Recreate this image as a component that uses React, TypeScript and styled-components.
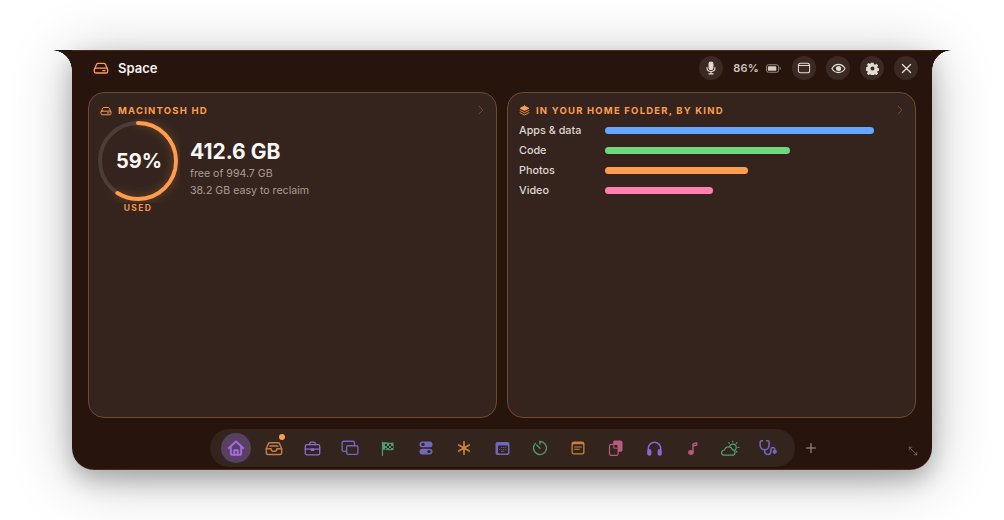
import { ReactNode } from "react";
import styled, { createGlobalStyle } from "styled-components";

const Global = createGlobalStyle`
  html, body {
    margin: 0;
    padding: 0;
    background: #fff;
    font-family: Inter, "Liberation Sans", sans-serif;
    -webkit-font-smoothing: antialiased;
  }
`;

const Page = styled.div`
  width: 1004px;
  height: 520px;
  overflow: hidden;
  padding: 50px 72px 50px;
  box-sizing: border-box;
`;

const Window = styled.div`
  position: relative;
  height: 420px;
  display: flex;
  flex-direction: column;
  background: #27140c;
  border-radius: 0 0 22px 22px;
  box-shadow: 0 10px 22px rgba(0, 0, 0, 0.22), 0 8px 60px rgba(0, 0, 0, 0.26),
    0 0.5px 0 rgba(255, 170, 110, 0.3) inset, 0 -0.5px 0 rgba(255, 170, 110, 0.3) inset;

  &::before,
  &::after {
    content: "";
    position: absolute;
    top: 0;
    width: 20px;
    height: 20px;
  }
  &::before {
    left: -20px;
    background: radial-gradient(circle at 0 100%, transparent 19.5px, #27140c 20px);
  }
  &::after {
    right: -20px;
    background: radial-gradient(circle at 100% 100%, transparent 19.5px, #27140c 20px);
  }
`;

const Header = styled.header`
  display: flex;
  align-items: center;
  height: 36px;
  padding: 0 14px 0 21px;
`;

const Title = styled.div`
  display: flex;
  align-items: center;
  gap: 9px;
  flex: 1;
  margin-bottom: 1px;
  font-size: 13px;
  font-weight: 600;
  color: #f6f2ee;
`;

const Controls = styled.div`
  display: flex;
  align-items: center;
  gap: 10px;
`;

const RoundButton = styled.button`
  width: 24px;
  height: 24px;
  padding: 0;
  border: none;
  border-radius: 50%;
  background: #3a2a23;
  color: #e3dbd5;
  display: flex;
  align-items: center;
  justify-content: center;
`;

const Battery = styled.div`
  display: flex;
  align-items: center;
  gap: 7px;
  margin-right: 1px;
  font-size: 11px;
  font-weight: 600;
  letter-spacing: 0.2px;
  color: #cfc6c0;
`;

const Panels = styled.main`
  flex: none;
  height: 326px;
  margin-top: 6px;
  padding: 0 16px;
  display: grid;
  grid-template-columns: 1fr 1fr;
  gap: 10px;
`;

const Panel = styled.section`
  position: relative;
  border: 1px solid #74482a;
  border-radius: 16px;
  background: #35241d;
  padding: 11px 12px 11px 11px;
  box-sizing: border-box;
`;

const PanelHead = styled.div`
  display: flex;
  align-items: center;
  gap: 6px;
  height: 13px;
  font-size: 9.5px;
  font-weight: 700;
  letter-spacing: 1.2px;
  color: #ff9d4d;
`;

const Chevron = styled.div`
  position: absolute;
  top: 12px;
  right: 10px;
  color: #7a6250;
  display: flex;
`;

const DiskRow = styled.div`
  display: flex;
  align-items: flex-start;
  gap: 10px;
  margin-top: 2px;
  margin-left: -4px;
`;

const RingWrap = styled.div`
  position: relative;
  width: 84px;
  flex: none;
  display: flex;
  flex-direction: column;
  align-items: center;
`;

const RingValue = styled.div`
  position: absolute;
  top: 0;
  left: 1px;
  width: 84px;
  height: 84px;
  display: flex;
  align-items: center;
  justify-content: center;
  font-size: 20px;
  font-weight: 700;
  color: #fbf8f6;
`;

const RingLabel = styled.div`
  font-size: 8.5px;
  font-weight: 700;
  letter-spacing: 1.3px;
  color: #f0964c;
`;

const DiskText = styled.div`
  display: flex;
  flex-direction: column;
  padding-top: 21px;
`;

const BigValue = styled.div`
  font-size: 21px;
  line-height: 24px;
  font-weight: 700;
  color: #fbf8f6;
  margin-bottom: 1px;
`;

const SubText = styled.div`
  font-size: 10.6px;
  line-height: 17px;
  color: #a99c95;
`;

const Rows = styled.div`
  display: flex;
  flex-direction: column;
  gap: 6px;
  margin-top: 6px;
  padding-right: 29px;
`;

const Row = styled.div`
  display: flex;
  align-items: center;
  height: 14px;
`;

const RowLabel = styled.div`
  width: 86px;
  flex: none;
  font-size: 10.8px;
  font-weight: 500;
  color: #ddd6d1;
`;

const Track = styled.div`
  flex: 1;
  height: 7px;
`;

const Fill = styled.div<{ $color: string; $pct: number }>`
  height: 100%;
  width: ${(p) => p.$pct}%;
  border-radius: 4px;
  background: ${(p) => p.$color};
`;

const Footer = styled.footer`
  flex: 1;
  display: flex;
  align-items: flex-start;
  padding: 11px 0 0 138px;
`;

const Dock = styled.nav`
  display: flex;
  align-items: center;
  gap: 8px;
  height: 38px;
  padding: 0 12px 0 11px;
  border-radius: 19px;
  background: #33241e;
`;

const DockItem = styled.div<{ $active?: boolean; $color: string }>`
  position: relative;
  width: 30px;
  height: 30px;
  flex: none;
  display: flex;
  align-items: center;
  justify-content: center;
  border-radius: 50%;
  color: ${(p) => p.$color};
  background: ${(p) => (p.$active ? "#574060" : "transparent")};
`;

const Dot = styled.span`
  position: absolute;
  top: 1px;
  right: 4px;
  width: 6px;
  height: 6px;
  border-radius: 50%;
  background: #ff9d4d;
`;

const AddButton = styled.div`
  margin-left: 10px;
  height: 38px;
  display: flex;
  align-items: center;
  color: #a59a94;
`;

const ResizeGrip = styled.div`
  position: absolute;
  right: 13px;
  bottom: 13px;
  display: flex;
  color: #7a6670;
`;

type IconProps = { size?: number; children: ReactNode; sw?: number };

function Ico({ size = 16, children, sw = 1.5 }: IconProps) {
  return (
    <svg
      width={size}
      height={size}
      viewBox="0 0 16 16"
      fill="none"
      stroke="currentColor"
      strokeWidth={sw}
      strokeLinecap="round"
      strokeLinejoin="round"
    >
      {children}
    </svg>
  );
}

function DiskIcon({ size = 16, sw = 1.3 }: { size?: number; sw?: number }) {
  return (
    <Ico size={size} sw={sw}>
      <path d="M1.5 9.2 3.6 4.3C3.9 3.6 4.4 3.3 5.1 3.3h5.8c.7 0 1.2.3 1.5 1l2.1 4.9" />
      <rect x="1.3" y="8.2" width="13.4" height="4.8" rx="1.6" />
      <path d="M9.8 10.6h2.4" />
    </Ico>
  );
}

const dockIcons: { color: string; icon: ReactNode; active?: boolean; dot?: boolean }[] = [
  {
    color: "#a768e6",
    active: true,
    icon: (
      <Ico size={18} sw={1.7}>
        <path d="M1.6 8 8 2.200 14.400 8" />
        <path d="M3.400 7v6.400c0 .4.2.6.6.6h8c.4 0 .6-.2.6-.6V7" />
        <path d="M6.400 14v-4h3.200v4" />
      </Ico>
    ),
  },
  {
    color: "#c27c48",
    dot: true,
    icon: (
      <Ico size={18} sw={1.3}>
        <path d="M1.200 8.600 3 4.200c.2-.5.6-.8 1.200-.8h7.600c.6 0 1 .3 1.200.8l1.800 4.400" />
        <path d="M1.200 8.600v3.600c0 1 .6 1.600 1.600 1.600h10.400c1 0 1.600-.6 1.600-1.600V8.600h-4.200c0 1.400-1 2.400-2.600 2.400S5.400 10 5.400 8.600H1.200Z" />
        <path d="M4.400 6.200h7.200" />
      </Ico>
    ),
  },
  {
    color: "#8f6cd2",
    icon: (
      <Ico size={17} sw={1.2}>
        <rect x="1.200" y="4.400" width="13.600" height="9.600" rx="1.600" />
        <path d="M5.400 4.400V3.200c0-.7.4-1.100 1.100-1.100h3c.7 0 1.100.4 1.100 1.100v1.200" />
        <path d="M1.200 8.600h13.600" />
        <path d="M7 8.600h2v1.200H7z" />
      </Ico>
    ),
  },
  {
    color: "#6f68bc",
    icon: (
      <Ico size={18} sw={1.2}>
        <path d="M5 11H2.400C1.500 11 1 10.500 1 9.600V3.400C1 2.500 1.500 2 2.400 2h8.200c.9 0 1.400.5 1.400 1.400V6" />
        <rect x="5" y="6" width="10" height="7.600" rx="1.400" />
      </Ico>
    ),
  },
  {
    color: "#4f9e6c",
    icon: (
      <svg width="14" height="15" viewBox="0 0 14 15">
        <path d="M1.500 1v13.500" fill="none" stroke="currentColor" strokeWidth="1.200" strokeLinecap="round" />
        <path d="M2 1.500c3-.8 5 .8 10.500 0v7.500c-5.500.8-7.500-.8-10.500 0V1.500Z" fill="currentColor" />
        <path d="M4 3h2v2H4zM8 3h2v2H8zM6 5h2v2H6zM10 5h2v2h-2zM4 7h1.500v1.200H4zM8 7h2v1.200H8z" fill="#33241e" />
      </svg>
    ),
  },
  {
    color: "#6f68bc",
    icon: (
      <svg width="14" height="16" viewBox="0 0 14 16">
        <rect x="0.500" y="1.500" width="13" height="5.800" rx="2.900" fill="currentColor" />
        <circle cx="4" cy="4.400" r="1.700" fill="#33241e" />
        <rect x="0.500" y="8.700" width="13" height="5.800" rx="2.900" fill="currentColor" />
        <circle cx="10" cy="11.600" r="1.700" fill="#33241e" />
      </svg>
    ),
  },
  {
    color: "#c9803f",
    icon: (
      <Ico size={16} sw={1.7}>
        <path d="M8 1.800v12.400M2.700 4.900l10.600 6.200M13.300 4.900 2.700 11.100" />
      </Ico>
    ),
  },
  {
    color: "#6f68bc",
    icon: (
      <svg width="15" height="15" viewBox="0 0 15 15">
        <rect x="0.500" y="1" width="14" height="13" rx="2" fill="currentColor" />
        <rect x="3" y="4.500" width="10" height="8" rx="1" fill="#33241e" />
        <path
          d="M6 6h1.200v1H6zM8 6h1.200v1H8zM10 6h1.200v1H10zM4 8h1.200v1H4zM6 8h1.200v1H6zM8 8h1.200v1H8zM10 8h1.200v1H10zM6 10h3.200v1H6z"
          fill="currentColor"
          opacity={0.7}
        />
      </svg>
    ),
  },
  {
    color: "#4f9e6c",
    icon: (
      <Ico size={16} sw={1.3}>
        <path d="M8 1.500a6.500 6.500 0 1 1-4.600 1.900" />
        <path d="M8 1.500v2.600" />
        <path d="M4.700 5 8 8.200" />
      </Ico>
    ),
  },
  {
    color: "#c9803f",
    icon: (
      <svg width="14" height="14" viewBox="0 0 14 14">
        <rect x="0.500" y="0.500" width="13" height="13" rx="2.500" fill="currentColor" />
        <rect x="1.800" y="3.200" width="10.400" height="9" rx="0.800" fill="#33241e" />
        <path d="M3.200 5.500h7.600v1H3.200zM3.200 7.800h5.500v1H3.200z" fill="currentColor" />
      </svg>
    ),
  },
  {
    color: "#b85a82",
    icon: (
      <svg width="16" height="18" viewBox="0 0 16 18">
        <path d="M5.200 3c0-1 .6-1.600 1.600-1.600h5.600c1.200 0 2.100.9 2.100 2.100v7.600c0 1-.6 1.600-1.600 1.600H6.800c-1 0-1.600-.6-1.600-1.600V3Z" fill="currentColor" />
        <rect x="1.500" y="5.400" width="8.600" height="11" rx="1.600" fill="#33241e" stroke="currentColor" strokeWidth="1.200" />
        <path d="M5.800 5.800v3.400h3.800" fill="none" stroke="currentColor" strokeWidth="1" />
      </svg>
    ),
  },
  {
    color: "#8f62d2",
    icon: (
      <Ico size={17} sw={1.4}>
        <path d="M2.200 11V8a5.800 5.800 0 0 1 11.600 0v3" />
        <rect x="1.800" y="9.200" width="2.600" height="5" rx="1.200" fill="currentColor" />
        <rect x="11.600" y="9.200" width="2.600" height="5" rx="1.200" fill="currentColor" />
      </Ico>
    ),
  },
  {
    color: "#b85a82",
    icon: (
      <Ico size={15} sw={1.5}>
        <path d="M8.500 12.300V3.200c1.600-.9 2.700-1 4-1.200v2.200c-1.400.2-2.500.4-4 1.200" />
        <ellipse cx="6.300" cy="12.300" rx="2.200" ry="1.900" fill="currentColor" />
      </Ico>
    ),
  },
  {
    color: "#4f9e6c",
    icon: (
      <svg width="20" height="17" viewBox="0 0 20 17" fill="none" stroke="currentColor" strokeWidth="1.200" strokeLinecap="round">
        <path d="M4.200 15.200h7.600c1.900 0 3.200-1.200 3.200-2.800 0-1.500-1.200-2.600-2.700-2.700C11.800 7.800 10.400 6.800 8.600 6.800c-2.100 0-3.700 1.400-4 3.200-1.700.1-3 1.200-3 2.700 0 1.500 1.100 2.500 2.600 2.500Z" />
        <path d="M9.600 6.600c.4-1.500 1.700-2.500 3.200-2.500 1.900 0 3.400 1.500 3.400 3.400 0 1-.4 1.900-1.100 2.500" />
        <path d="M12.800 1v1M17 2.700l-.7.7M19 7.500h-1M17 12l-.7-.7M8.700 2.700l.6.6" />
      </svg>
    ),
  },
  {
    color: "#6f68bc",
    icon: (
      <Ico size={18} sw={1.4}>
        <path d="M3.200 1.600h-.9C1.600 1.600 1 2.200 1 3v2.400C1 7.700 2.800 9.600 5 9.600S9 7.700 9 5.400V3c0-.8-.6-1.400-1.300-1.400h-.9" />
        <path d="M5 9.600v.7c0 2 1.300 3.500 3 3.500s2.600-1.400 2.600-3.100V9.300c0-1 .7-1.800 1.700-1.800s1.700.8 1.700 1.800v.3" />
        <circle cx="14" cy="11.400" r="1.200" fill="currentColor" />
      </Ico>
    ),
  },
];

const kinds = [
  { label: "Apps & data", color: "#66a6ff", pct: 100 },
  { label: "Code", color: "#70d67f", pct: 68.8 },
  { label: "Photos", color: "#ff9d4f", pct: 53.2 },
  { label: "Video", color: "#ff7fb0", pct: 40 },
];

function Ring({ pct }: { pct: number }) {
  const r = 38;
  const c = 2 * Math.PI * r;
  return (
    <svg width="84" height="84" viewBox="0 0 84 84">
      <circle cx="42" cy="42" r={r} fill="none" stroke="#4b3d37" strokeWidth="4" />
      <circle
        cx="42"
        cy="42"
        r={r}
        fill="none"
        stroke="#ff9d4d"
        strokeWidth="4"
        strokeLinecap="round"
        strokeDasharray={`${(c * pct) / 100} ${c}`}
        transform="rotate(-90 42 42)"
        style={{ filter: "drop-shadow(0 0 4px rgba(255,157,77,.35))" }}
      />
    </svg>
  );
}

export default function App() {
  return (
    <Page>
      <Global />
      <Window>
        <Header>
          <Title>
            <span style={{ color: "#ff9d4d", display: "flex" }}>
              <DiskIcon size={16} />
            </span>
            Space
          </Title>
          <Controls>
            <RoundButton aria-label="Mic">
              <Ico size={14} sw={1.3}>
                <rect x="5.800" y="1.200" width="4.400" height="8.600" rx="2.200" fill="currentColor" />
                <path d="M3.400 7.400c0 2.800 2 4.600 4.600 4.600s4.600-1.800 4.600-4.600M8 12v2.600M5.600 14.700h4.800" />
              </Ico>
            </RoundButton>
            <Battery>
              86%
              <svg width="15" height="9" viewBox="0 0 16 9">
                <rect x="0.500" y="0.500" width="13" height="8" rx="2.200" fill="none" stroke="#9c918b" />
                <rect x="2" y="2" width="9" height="5" rx="1" fill="#d6cec8" />
                <path d="M14.800 3v3c.7-.3 1-.9 1-1.500s-.3-1.200-1-1.500Z" fill="#9c918b" />
              </svg>
            </Battery>
            <RoundButton aria-label="Window">
              <Ico size={14} sw={1.2}>
                <rect x="1.600" y="2.600" width="12.800" height="10.800" rx="2.400" />
                <path d="M2 5.200h12" />
              </Ico>
            </RoundButton>
            <RoundButton aria-label="Eye">
              <Ico size={15} sw={1.2}>
                <path d="M1 8c1.800-3 4.200-4.400 7-4.400S13.200 5 15 8c-1.800 3-4.200 4.400-7 4.400S2.800 11 1 8Z" />
                <circle cx="8" cy="8" r="2.200" fill="currentColor" />
              </Ico>
            </RoundButton>
            <RoundButton aria-label="Settings">
              <svg width="13" height="13" viewBox="0 0 16 16" fill="currentColor">
                <path
                  fillRule="evenodd"
                  d="M6.600.8h2.800l.4 2 1.300.6 1.800-1.100 2 2-1.100 1.800.6 1.300 2 .4v2.800l-2 .4-.6 1.300 1.100 1.800-2 2-1.800-1.100-1.300.6-.4 2H6.600l-.4-2-1.300-.6-1.800 1.100-2-2 1.100-1.800-.6-1.300-2-.4V6.600l2-.4.6-1.300-1.100-1.800 2-2 1.800 1.100 1.300-.6.400-2ZM8 5.600a2.400 2.400 0 1 0 0 4.800 2.400 2.400 0 0 0 0-4.800Z"
                />
              </svg>
            </RoundButton>
            <RoundButton aria-label="Close">
              <Ico size={13} sw={1.6}>
                <path d="m3 3 10 10M13 3 3 13" />
              </Ico>
            </RoundButton>
          </Controls>
        </Header>

        <Panels>
          <Panel>
            <PanelHead>
              <DiskIcon size={12} sw={1.3} />
              MACINTOSH HD
            </PanelHead>
            <Chevron>
              <Ico size={10} sw={1.2}>
                <path d="m5 2 6 6-6 6" />
              </Ico>
            </Chevron>
            <DiskRow>
              <RingWrap>
                <Ring pct={59} />
                <RingValue>59%</RingValue>
                <RingLabel>USED</RingLabel>
              </RingWrap>
              <DiskText>
                <BigValue>412.6 GB</BigValue>
                <SubText>free of 994.7 GB</SubText>
                <SubText>38.2 GB easy to reclaim</SubText>
              </DiskText>
            </DiskRow>
          </Panel>

          <Panel>
            <PanelHead>
              <Ico size={11} sw={1.2}>
                <path d="M8 1.500 14.500 4.800 8 8 1.500 4.800 8 1.500Z" fill="currentColor" />
                <path d="M1.500 8 8 11.200 14.500 8M1.500 11.200 8 14.500l6.500-3.300" />
              </Ico>
              IN YOUR HOME FOLDER, BY KIND
            </PanelHead>
            <Chevron>
              <Ico size={10} sw={1.2}>
                <path d="m5 2 6 6-6 6" />
              </Ico>
            </Chevron>
            <Rows>
              {kinds.map((k) => (
                <Row key={k.label}>
                  <RowLabel>{k.label}</RowLabel>
                  <Track>
                    <Fill $color={k.color} $pct={k.pct} />
                  </Track>
                </Row>
              ))}
            </Rows>
          </Panel>
        </Panels>

        <Footer>
          <Dock>
            {dockIcons.map((d, i) => (
              <DockItem key={i} $active={d.active} $color={d.color}>
                {d.icon}
                {d.dot && <Dot />}
              </DockItem>
            ))}
          </Dock>
          <AddButton>
            <Ico size={12} sw={1.4}>
              <path d="M8 2v12M2 8h12" />
            </Ico>
          </AddButton>
        </Footer>

        <ResizeGrip>
          <Ico size={12} sw={1.1}>
            <path d="m3 3 10 10M3 3v3.500M3 3h3.500M13 13V9.500M13 13H9.500" />
          </Ico>
        </ResizeGrip>
      </Window>
    </Page>
  );
}
